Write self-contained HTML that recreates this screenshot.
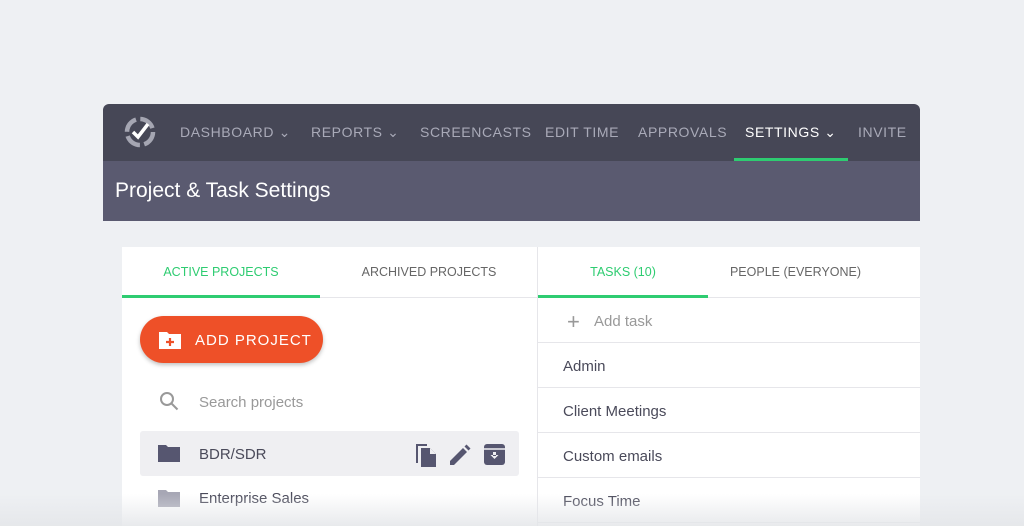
<!DOCTYPE html>
<html><head><style>
*{margin:0;padding:0;box-sizing:border-box}
html,body{width:1024px;height:526px;overflow:hidden}
body{background:#eef0f3;font-family:"Liberation Sans",sans-serif;position:relative}
.abs{position:absolute}
.nav{left:103px;top:104px;width:817px;height:57px;background:#464756;border-radius:6px 6px 0 0}
.ni{position:absolute;top:124px;font-size:14px;letter-spacing:.6px;color:#a9aab8;white-space:nowrap}
.hdr{left:103px;top:161px;width:817px;height:60px;background:#5a5a70}
.card{left:122px;top:247px;width:798px;height:279px;background:#fff}
.tab{position:absolute;top:265px;font-size:12.5px;color:#666;text-align:center}
.row{position:absolute;left:538px;width:382px;height:45px;border-bottom:1px solid #e6e6ea;font-size:15px;color:#4a4a5a;padding-left:25px;line-height:47px}
</style></head><body>
<div class="abs nav"></div>
<svg class="abs" style="left:122px;top:114px" width="36" height="36" viewBox="0 0 36 36">
<circle cx="18" cy="18" r="13" fill="none" stroke="#a5a6b2" stroke-width="4.5" stroke-dasharray="16 4.4"/>
<path d="M11 18 L16 23 L26 10" fill="none" stroke="#fff" stroke-width="3.5"/>
</svg>
<div class="ni" style="left:180px">DASHBOARD ⌄</div>
<div class="ni" style="left:311px">REPORTS ⌄</div>
<div class="ni" style="left:420px">SCREENCASTS</div>
<div class="ni" style="left:545px">EDIT TIME</div>
<div class="ni" style="left:638px">APPROVALS</div>
<div class="ni" style="left:745px;color:#fff">SETTINGS ⌄</div>
<div class="ni" style="left:858px">INVITE</div>
<div class="abs" style="left:734px;top:158px;width:114px;height:3px;background:#2ecc71"></div>
<div class="abs hdr"></div>
<div class="abs" style="left:115px;top:179px;font-size:21px;color:#fff">Project &amp; Task Settings</div>
<div class="abs card"></div>
<div class="abs" style="left:122px;top:297px;width:798px;height:1px;background:#e6e6ea"></div>
<div class="abs" style="left:537px;top:247px;width:1px;height:280px;background:#e6e6ea"></div>
<div class="tab" style="left:122px;width:198px;color:#2ecc71">ACTIVE PROJECTS</div>
<div class="tab" style="left:330px;width:198px">ARCHIVED PROJECTS</div>
<div class="tab" style="left:538px;width:170px;color:#2ecc71">TASKS (10)</div>
<div class="tab" style="left:708px;width:175px">PEOPLE (EVERYONE)</div>
<div class="abs" style="left:122px;top:295px;width:198px;height:3px;background:#2ecc71"></div>
<div class="abs" style="left:538px;top:295px;width:170px;height:3px;background:#2ecc71"></div>
<div class="abs" style="left:140px;top:316px;width:183px;height:47px;border-radius:24px;background:#ee5028;box-shadow:0 2px 4px rgba(0,0,0,.25);color:#fff;font-size:15px;letter-spacing:1px;line-height:49px;padding-left:55px">ADD PROJECT</div>
<svg class="abs" style="left:158px;top:330px" width="24" height="20" viewBox="0 0 24 20"><path d="M1 2h8l2 2h12v15H1z" fill="#fff"/><path d="M12 8v8M8 12h8" stroke="#ee5028" stroke-width="2.2"/></svg>
<svg class="abs" style="left:158px;top:390px" width="22" height="22" viewBox="0 0 22 22"><circle cx="9" cy="9" r="6" fill="none" stroke="#999" stroke-width="2"/><path d="M13.5 13.5l6 6" stroke="#999" stroke-width="2"/></svg>
<div class="abs" style="left:199px;top:394px;font-size:15px;color:#999">Search projects</div>
<div class="abs" style="left:140px;top:431px;width:379px;height:45px;background:#efeff2;border-radius:3px"></div>
<svg class="abs" style="left:158px;top:444px" width="22" height="18" viewBox="0 0 22 18"><path d="M0 1h8l2 2h12v15H0z" fill="#565670"/></svg>
<div class="abs" style="left:199px;top:446px;font-size:15px;color:#4a4a5a">BDR/SDR</div>
<svg class="abs" style="left:414px;top:442px" width="24" height="26" viewBox="0 0 24 26"><path d="M2 2h11v2H4v17H2z" fill="#565670"/><path d="M7 6h9l6 6v13H7z" fill="#565670"/><path d="M16 6v6h6z" fill="#efeff2"/></svg>
<svg class="abs" style="left:449px;top:444px" width="22" height="22" viewBox="0 0 22 22"><path d="M1 21v-4L14 4l4 4L5 21z M15.5 2.5l2-2 4 4-2 2z" fill="#565670"/></svg>
<svg class="abs" style="left:484px;top:444px" width="21" height="21" viewBox="0 0 21 21"><rect x="0" y="0" width="21" height="21" rx="3" fill="#565670"/><path d="M0 5h21" stroke="#efeff2" stroke-width="1.5"/><path d="M6.5 11l4 4 4-4z M9 8h3v4H9z" fill="#efeff2"/></svg>
<svg class="abs" style="left:158px;top:489px" width="22" height="18" viewBox="0 0 22 18"><path d="M0 1h8l2 2h12v15H0z" fill="#a7a7b5"/></svg>
<div class="abs" style="left:199px;top:490px;font-size:15px;color:#4a4a5a">Enterprise Sales</div>
<div class="row" style="top:298px;color:#999;padding-left:56px">Add task</div>
<div class="abs" style="left:567px;top:312px;font-size:22px;color:#999;line-height:20px">+</div>
<div class="row" style="top:343px">Admin</div>
<div class="row" style="top:388px">Client Meetings</div>
<div class="row" style="top:433px">Custom emails</div>
<div class="row" style="top:478px">Focus Time</div>
<div class="abs" style="left:0;top:494px;width:1024px;height:32px;background:linear-gradient(rgba(238,240,243,0),rgba(228,230,233,.85))"></div>
</body></html>
